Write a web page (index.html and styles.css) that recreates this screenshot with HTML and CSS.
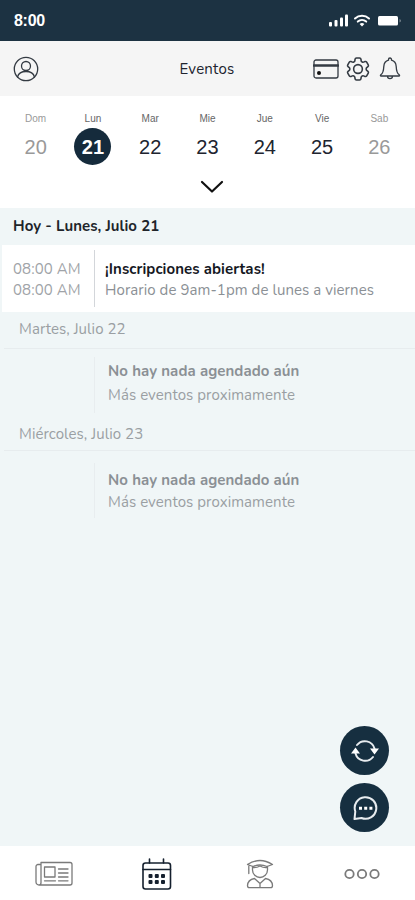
FILE: index.html
```html
<!DOCTYPE html>
<html lang="es">

<head>
    <meta charset="UTF-8">
    <meta name="viewport" content="width=device-width, initial-scale=1.0">
    <title>Eventos</title>
    <link rel="stylesheet" href="styles.css">
</head>

<body>
    <div class="app">
        <div class="status">
            <span class="time">8:00</span>
            <svg class="signals" width="74" height="16" viewBox="0 0 74 16">
                <rect x="1" y="9" width="3" height="4.5" rx="1" />
                <rect x="6.5" y="7" width="3" height="6.5" rx="1" />
                <rect x="12" y="4.5" width="3" height="9" rx="1" />
                <rect x="17" y="1.5" width="3" height="12" rx="1" />
                <g fill="none" stroke="#fff" stroke-width="2">
                    <path d="M27 5.500a10.500 10.500 0 0 1 14 0" />
                    <path d="M29.800 8.600a6.500 6.500 0 0 1 8.400 0" />
                </g>
                <path d="M31.600 11a4 4 0 0 1 4.800 0L34 13.600z" />
                <rect x="50" y="3" width="20" height="9.500" rx="1.500" />
                <path d="M71.500 6v3.500q1.500-.5 1.500-1.750T71.500 6z" opacity=".4" />
            </svg>
        </div>

        <div class="header">
            <svg class="user" width="26" height="26" viewBox="0 0 26 26">
                <circle cx="13" cy="13" r="11.700" />
                <circle cx="13" cy="10" r="4.500" />
                <path d="M4.500 21c1-3.800 4.500-5.500 8.500-5.500s7.500 1.700 8.500 5.500" />
            </svg>
            <h1>Eventos</h1>
            <div class="tools">
                <svg width="26" height="20" viewBox="0 0 26 20">
                    <rect x="1" y="1" width="24" height="18" rx="2" />
                    <path d="M1 6.500h24" stroke-width="2.600" />
                    <circle cx="6" cy="14" r="2" fill="#111" stroke="none" />
                </svg>
                <svg class="gear" width="26" height="26" viewBox="1.300 1.300 21.400 21.400">
                    <path d="M9.594 3.940c.09-.542.56-.94 1.110-.94h2.593c.55 0 1.020.398 1.110.94l.213 1.281c.063.374.313.686.645.87.074.04.147.083.22.127.325.196.72.257 1.075.124l1.217-.456a1.125 1.125 0 0 1 1.370.49l1.296 2.247a1.125 1.125 0 0 1-.26 1.431l-1.003.827c-.293.241-.438.613-.43.992a7.723 7.723 0 0 1 0 .255c-.008.378.137.75.43.991l1.004.827c.424.35.534.955.26 1.430l-1.298 2.247a1.125 1.125 0 0 1-1.369.491l-1.217-.456c-.355-.133-.75-.072-1.076.124a6.470 6.470 0 0 1-.22.128c-.331.183-.581.495-.644.869l-.213 1.281c-.09.543-.56.94-1.110.94h-2.594c-.55 0-1.019-.398-1.110-.94l-.213-1.281c-.062-.374-.312-.686-.644-.87a6.520 6.520 0 0 1-.22-.127c-.325-.196-.72-.257-1.076-.124l-1.217.456a1.125 1.125 0 0 1-1.369-.49l-1.297-2.247a1.125 1.125 0 0 1 .26-1.431l1.004-.827c.292-.24.437-.613.43-.991a6.932 6.932 0 0 1 0-.255c.007-.38-.138-.751-.43-.992l-1.004-.827a1.125 1.125 0 0 1-.26-1.430l1.297-2.247a1.125 1.125 0 0 1 1.370-.491l1.216.456c.356.133.751.072 1.076-.124.072-.044.146-.086.22-.128.332-.183.582-.495.644-.869l.214-1.280Z" />
                    <circle cx="12" cy="12" r="3.600" />
                </svg>
                <svg width="22" height="24" viewBox="0 0 22 24">
                    <path d="M9.500 3.200V2.500a1.500 1.500 0 0 1 3 0v.7c3 .8 4.500 3.400 4.700 6.300.2 4.600.8 6.800 3 8.300.6.5.5 1.200-.3 1.200H2.100c-.8 0-.9-.7-.3-1.200 2.200-1.500 2.800-3.700 3-8.300.2-2.900 1.700-5.500 4.700-6.300zM8.500 19c0 3.400 5 3.400 5 0" />
                </svg>
            </div>
        </div>

        <div class="week">
            <div class="days">
                <div class="day off"><span>Dom</span><b>20</b></div>
                <div class="day active"><span>Lun</span><b>21</b></div>
                <div class="day"><span>Mar</span><b>22</b></div>
                <div class="day"><span>Mie</span><b>23</b></div>
                <div class="day"><span>Jue</span><b>24</b></div>
                <div class="day"><span>Vie</span><b>25</b></div>
                <div class="day off"><span>Sab</span><b>26</b></div>
            </div>
            <svg class="arrow" width="24" height="14" viewBox="0 0 24 14">
                <path d="M2 2l10 9.500L22 2" />
            </svg>
        </div>

        <div class="list">
            <h2 class="today">Hoy - Lunes, Julio 21</h2>
            <div class="event card">
                <div class="hours">
                    <p>08:00 AM</p>
                    <p>08:00 AM</p>
                </div>
                <div class="info">
                    <p class="title">¡Inscripciones abiertas!</p>
                    <p class="text">Horario de 9am-1pm de lunes a viernes</p>
                </div>
            </div>

            <h2 class="date">Martes, Julio 22</h2>
            <div class="event empty">
                <div class="hours"></div>
                <div class="info">
                    <p class="title">No hay nada agendado aún</p>
                    <p class="text">Más eventos proximamente</p>
                </div>
            </div>

            <h2 class="date second">Miércoles, Julio 23</h2>
            <div class="event empty last">
                <div class="hours"></div>
                <div class="info">
                    <p class="title">No hay nada agendado aún</p>
                    <p class="text">Más eventos proximamente</p>
                </div>
            </div>
        </div>

        <div class="nav">
            <svg width="38" height="26" viewBox="0 0 38 26">
                <path d="M6 1.500h29a2 2 0 0 1 2 2v18.500a2 2 0 0 1-2 2H4a3 3 0 0 1-3-3V5.500a2 2 0 0 1 2-2h2M6 1.500v20q0 2.500-2 2.500" />
                <rect x="9.500" y="6" width="10.500" height="10" />
                <path d="M23.500 8h9.500M23.500 12h9.500M23.500 16h9.500M9.500 19.800h11M23.500 19.800h9.500" />
            </svg>
            <svg class="calendar" width="30" height="32" viewBox="0 0 30 32">
                <rect x="1" y="5" width="27.500" height="26" rx="2.500" />
                <path d="M1 11.500h27.500M7.500 1v4M21.500 1v4" />
                <g fill="#15202e" stroke="none">
                    <rect x="6.500" y="16" width="4" height="4" rx="1" />
                    <rect x="12.800" y="16" width="4" height="4" rx="1" />
                    <rect x="19" y="16" width="4" height="4" rx="1" />
                    <rect x="6.500" y="22" width="4" height="4" rx="1" />
                    <rect x="12.800" y="22" width="4" height="4" rx="1" />
                    <rect x="19" y="22" width="4" height="4" rx="1" />
                </g>
            </svg>
            <svg width="28" height="30" viewBox="0 0 28 30">
                <path d="M1.500 5.500Q8 1.500 14 1.500t12.500 4L21 7.500M1.500 5.500L7 7.500q7-3 14 0M2.800 6v8.500" />
                <path d="M6.500 7.500v3.500c0 4 3.500 7.500 7.500 7.500s7.500-3.500 7.500-7.500V7.500M6.500 8.500q4 .5 7.500-1.500 3.500 2 7.500 1.500" />
                <path d="M8.500 19.500c-4 .8-6.800 3-7 7 0 1.500.5 2.200 2 2.200h21c1.500 0 2-.7 2-2.200-.2-4-3-6.200-7-7L14 24.500zM14 24.500v4" />
            </svg>
            <svg width="36" height="12" viewBox="0 0 36 12">
                <circle cx="5.500" cy="6" r="4.200" />
                <circle cx="18" cy="6" r="4.200" />
                <circle cx="30.500" cy="6" r="4.200" />
            </svg>
        </div>

        <div class="floating">
            <button>
                <svg width="28" height="24" viewBox="0 0 28 24">
                    <path d="M6 6A10 10 0 0 1 23.500 9.500M22 18A10 10 0 0 1 4.500 14.500" />
                    <path d="M0 14.500h9L4.500 8.500zM19 9.500h9L23.500 15.500z" class="full" />
                </svg>
            </button>
            <button>
                <svg width="26" height="26" viewBox="0 0 26 26">
                    <path d="M2.500 24l.8-7.500A10.800 10.800 0 1 1 9.500 23z" />
                    <path d="M7 11.800h3v3H7zM12.200 11.800h3v3h-3zM17.400 11.800h3v3h-3z" class="full" />
                </svg>
            </button>
        </div>
    </div>
</body>

</html>
```

FILE: styles.css
```css
* {
    margin: 0;
    padding: 0;
    box-sizing: border-box;
}

body {
    font-family: "Nunito", "Noto Sans", "Open Sans", sans-serif;
    background: #f0f6f7;
}

svg {
    display: block;
    fill: none;
    stroke-linecap: round;
    stroke-linejoin: round;
}

.app {
    position: relative;
    display: flex;
    flex-direction: column;
    height: 900px;
    overflow: hidden;
}

.status {
    display: flex;
    justify-content: space-between;
    align-items: center;
    height: 41px;
    padding: 1px 13px 0 14px;
    background: #1c3242;
    color: #fff;
}

.status .time {
    font: bold 16px/20px "Liberation Sans", sans-serif;
    letter-spacing: -0.3px;
}

.status .signals {
    fill: #fff;
}

.header {
    display: grid;
    grid-template-columns: 1fr auto 1fr;
    align-items: center;
    height: 55px;
    padding: 0 14px 0 13px;
    background: #f5f5f5;
}

.header svg {
    stroke: #333a42;
    stroke-width: 1.3;
}

.header h1 {
    padding-top: 1px;
    font-size: 15px;
    font-weight: 400;
    letter-spacing: 0.2px;
    color: #20242f;
}

.tools {
    display: flex;
    justify-content: flex-end;
    align-items: center;
    gap: 6px;
}

.tools .gear {
    margin-right: 2px;
}

.week {
    height: 112px;
    padding: 16px 7px 0;
    background: #fff;
}

.days {
    display: grid;
    grid-template-columns: repeat(7, 1fr);
}

.day {
    display: flex;
    flex-direction: column;
    align-items: center;
    font-family: "Liberation Sans", sans-serif;
    color: #20242f;
}

.day span {
    font-size: 10px;
    line-height: 14px;
    color: #666;
}

.day b {
    width: 37px;
    height: 37px;
    margin-top: 2px;
    border-radius: 50%;
    font-size: 20px;
    font-weight: 400;
    line-height: 39px;
    text-align: center;
}

.day.off,
.day.off span {
    color: #999;
}

.day.active b {
    background: #152b3c;
    color: #fff;
    font-weight: bold;
}

.arrow {
    margin: 15px auto 0 193px;
    stroke: #111;
    stroke-width: 2.2;
}

.list {
    flex: 1;
    background: #f0f6f7;
    letter-spacing: 0.07px;
}

.list h2 {
    font-size: 15px;
    line-height: 20px;
}

.list .today {
    height: 37px;
    padding: 8px 13px 0;
    font-weight: 700;
    color: #20242a;
}

.event {
    display: flex;
    font-size: 15px;
    line-height: 21px;
    color: #8b9095;
}

.card {
    height: 67px;
    margin-left: 2px;
    padding: 5px 0 5px 11px;
    background: #fff;
}

.card .hours {
    width: 82px;
    padding-top: 9px;
    border-right: 1px solid #d3d6da;
    line-height: 20.5px;
    color: #a0a3a7;
}

.card .info {
    padding: 9px 0 0 10px;
}

.card .title {
    font-weight: 700;
    color: #15181f;
}

.list .date {
    height: 37px;
    margin-left: 4px;
    padding: 7px 15px 0;
    border-bottom: 1px solid #e7ecee;
    font-weight: 400;
    color: #9a9fa3;
}

.empty {
    height: 67px;
    padding: 8px 0 3px;
}

.empty .hours {
    width: 95px;
    border-right: 1px solid #e8edef;
}

.empty .info {
    padding: 2px 0 0 13px;
    line-height: 24px;
}

.empty .title {
    font-weight: 700;
    color: #8b9095;
}

.empty .text {
    color: #9a9fa3;
}

.list .second {
    height: 35px;
    padding-top: 8px;
}

.last {
    padding: 12px 0 0;
}

.last .info {
    padding-top: 6px;
    line-height: 22px;
}

.nav {
    display: flex;
    align-items: center;
    height: 54px;
    padding: 2px 0 0 35px;
    background: #fff;
}

.nav svg {
    stroke: #7a7a7a;
    stroke-width: 1.3;
    margin-right: 76px;
}

.nav .calendar {
    margin: 0 74px 0 -7px;
    stroke: #15202e;
    stroke-width: 1.6;
}

.nav svg:nth-child(3) {
    margin-right: 70px;
}

.nav svg:last-child {
    margin: 0;
    stroke-width: 1.8;
}

.floating {
    position: absolute;
    right: 26px;
    bottom: 68px;
    display: grid;
    gap: 8px;
}

.floating button {
    display: flex;
    align-items: center;
    justify-content: center;
    width: 49px;
    height: 49px;
    border: 0;
    border-radius: 50%;
    background: #162f40;
}

.floating svg {
    stroke: #e8ecef;
    stroke-width: 2;
}

.floating .full {
    fill: #fff;
    stroke: none;
}
```
